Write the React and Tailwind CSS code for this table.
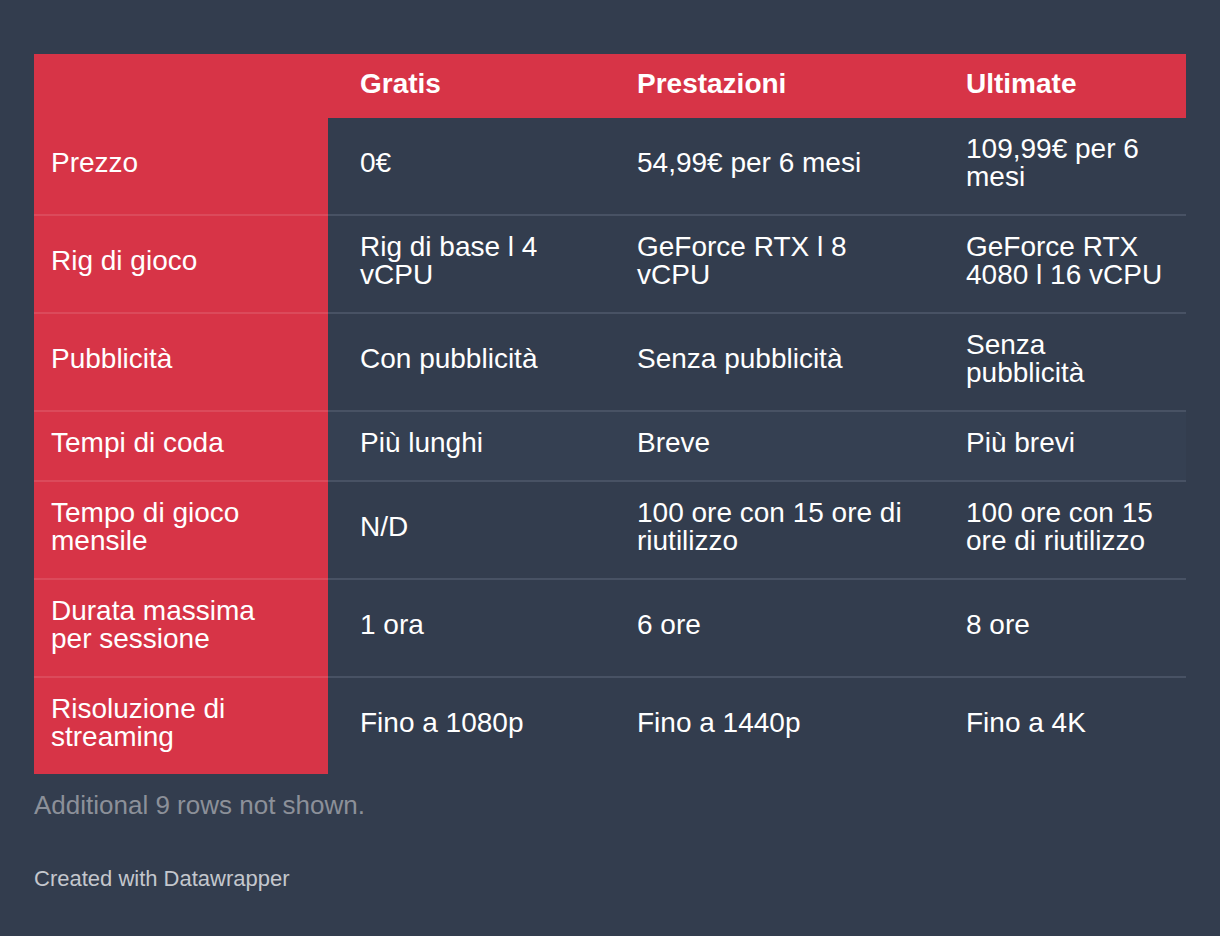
const colonne = ["Gratis", "Prestazioni", "Ultimate"];

const righe = [
  ["Prezzo", "0€", "54,99€ per 6 mesi", "109,99€ per 6 mesi"],
  ["Rig di gioco", "Rig di base l 4 vCPU", "GeForce RTX l 8 vCPU", "GeForce RTX 4080 l 16 vCPU"],
  ["Pubblicità", "Con pubblicità", "Senza pubblicità", "Senza pubblicità"],
  ["Tempi di coda", "Più lunghi", "Breve", "Più brevi"],
  ["Tempo di gioco mensile", "N/D", "100 ore con 15 ore di riutilizzo", "100 ore con 15 ore di riutilizzo"],
  ["Durata massima per sessione", "1 ora", "6 ore", "8 ore"],
  ["Risoluzione di streaming", "Fino a 1080p", "Fino a 1440p", "Fino a 4K"],
];

// padding per colonna, in modo che il testo vada a capo come nell'originale
const padCol = ["pl-[17px] pr-[32px]", "pl-[32px] pr-[17px]", "pl-[17px] pr-[32px]", "pl-[17px] pr-[17px]"];

export default function App() {
  return (
    <div
      className="min-h-[936px] w-full bg-[#333d4e] pl-[34px] pr-[34px] pt-[54px] text-white"
      style={{ fontFamily: '"Liberation Sans", Arial, Helvetica, sans-serif' }}
    >
      <div className="grid w-[1152px] grid-cols-[294px_292px_329px_237px]">
        {/* intestazione */}
        <div className="h-[64px] bg-[#d73447]" />
        {colonne.map((c, i) => (
          <div
            key={c}
            className={`h-[64px] bg-[#d73447] pt-[16px] text-[28px] font-bold leading-[28px] ${padCol[i + 1]}`}
          >
            {c}
          </div>
        ))}

        {righe.map((r, idx) => {
          const ultima = idx === righe.length - 1;
          return r.map((cella, j) => (
            <div
              key={`${idx}-${j}`}
              className={[
                "flex items-center pt-[17px] pb-[23px] text-[28px] leading-[28px]",
                padCol[j],
                j === 0 ? "bg-[#d73447]" : idx === 3 ? "bg-[#354052]" : "bg-[#333d4e]",
                ultima ? "" : j === 0 ? "border-b-2 border-[#db4a5b]" : "border-b-2 border-[#485264]",
              ].join(" ")}
            >
              {cella}
            </div>
          ));
        })}
      </div>

      <p className="mt-4 text-[26px] leading-[30px] text-[#8c9099]">Additional 9 rows not shown.</p>
      <p className="mt-[46px] text-[22px] leading-[26px] text-[#c4c7cd]">Created with Datawrapper</p>
    </div>
  );
}
